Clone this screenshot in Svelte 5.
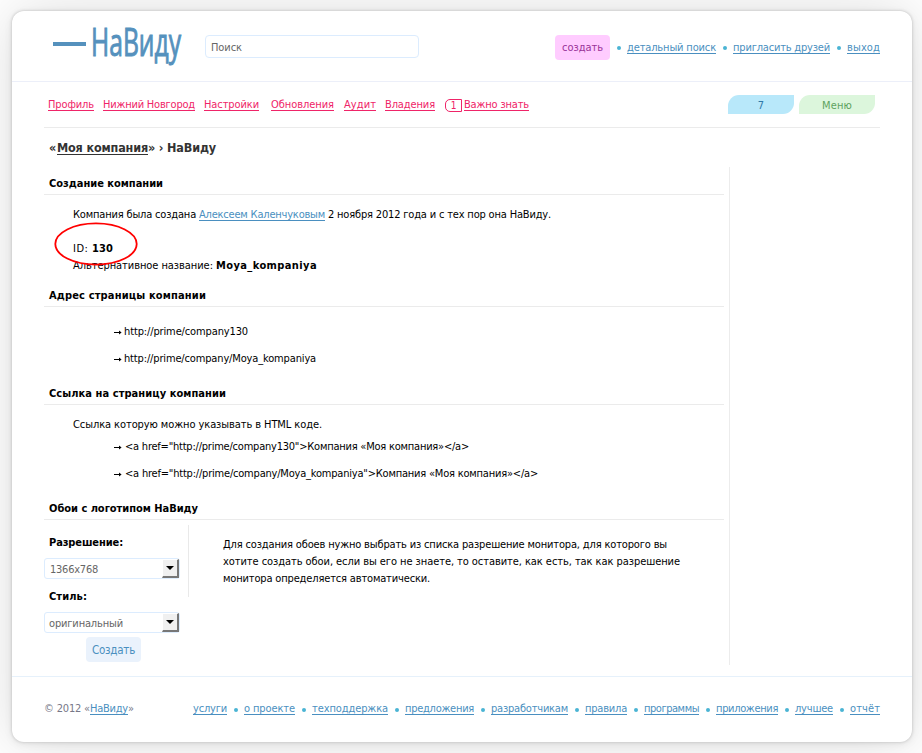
<script>
  const profileLinks = [
    ['Профиль', 46, 9],
    ['Нижний Новгород', 92, 9],
    ['Настройки', 55, 12],
    ['Обновления', 63, 10],
    ['Аудит', 32, 9],
    ['Владения', 50, 10]
  ];
  const topLinks = [
    ['детальный поиск', 89],
    ['пригласить друзей', 97],
    ['выход', 33]
  ];
  const footerLinks = [
    ['услуги', 34],
    ['о проекте', 51],
    ['техподдержка', 76],
    ['предложения', 69],
    ['разработчикам', 77],
    ['правила', 42],
    ['программы', 55],
    ['приложения', 62],
    ['лучшее', 38],
    ['отчёт', 30]
  ];
  const codeShort = '<a href="http://prime/company130">Компания «Моя компания»</a>';
  const codeLong = '<a href="http://prime/company/Moya_kompaniya">Компания «Моя компания»</a>';

  // Tracks a run of text so that it fills the given width.
  function fit(node, width) {
    const gap = width - node.getBoundingClientRect().width;
    node.style.letterSpacing = gap / node.textContent.length + 'px';
  }

  // Condenses the wordmark to the given width.
  function condense(node, width) {
    node.style.transform = `scaleX(${width / node.getBoundingClientRect().width})`;
  }
</script>

{#snippet t(text, width)}<span class="t" use:fit={width}>{text}</span>{/snippet}
{#snippet link(text, width)}<a class="t" href="#top" use:fit={width}>{text}</a>{/snippet}
{#snippet arrow()}
  <svg class="arrow" width="8" height="7" viewBox="0 0 8 7"><path d="M0 3h5V1.4L7.6 3.5 5 5.6V4H0z" fill="#000" /></svg>
{/snippet}
{#snippet select(text, width, pad)}
  <div class="select" style:padding-left="{pad}px">
    {@render t(text, width)}
    <span class="drop"><svg width="8" height="4" viewBox="0 0 8 4"><path d="M0 0h8L4 4z" fill="#000" /></svg></span>
  </div>
{/snippet}

<div class="page">
  <div class="card">
    <header>
      <div class="logo">
        <span class="dash"></span>
        <div class="word"><span use:condense={90}>НаВиду</span></div>
      </div>
      <div class="search">{@render t('Поиск', 31)}</div>
      <nav class="top">
        <span class="create">{@render t('создать', 41)}</span>
        {#each topLinks as [text, width]}<i></i>{@render link(text, width)}{/each}
      </nav>
    </header>

    <div class="bar">
      <nav class="profile">
        {#each profileLinks as [text, width, gap]}
          <span style:margin-right="{gap}px">{@render link(text, width)}</span>
        {/each}
        <span class="badge">1</span>
        {@render link('Важно знать', 65)}
      </nav>
      <div class="tabs">
        <span class="tab blue">7</span>
        <span class="tab green">{@render t('Меню', 30)}</span>
      </div>
    </div>

    <div class="body">
      <main>
        <h1>{@render t('«', 8)}{@render link('Моя компания', 91)}{@render t('» › НаВиду', 68)}</h1>

        <h2 class="first">{@render t('Создание компании', 114)}</h2>
        <section class="created">
          <p>{@render t('Компания была создана ', 126)}{@render link('Алексеем Каленчуковым', 126)}{@render t(' 2 ноября 2012 года и с тех пор она НаВиду.', 226)}</p>
          <p class="id">
            {@render t('ID: ', 19)}<b>{@render t('130', 21)}</b>
            <svg class="mark" width="86" height="46" viewBox="0 0 86 46"><ellipse cx="43" cy="23" rx="40.7" ry="20.6" /></svg>
          </p>
          <p>{@render t('Альтернативное название: ', 143)}<b>{@render t('Moya_kompaniya', 101)}</b></p>
        </section>

        <h2>{@render t('Адрес страницы компании', 157)}</h2>
        <ul class="addresses">
          <li>{@render arrow()}{@render t('http://prime/company130', 124)}</li>
          <li>{@render arrow()}{@render t('http://prime/company/Moya_kompaniya', 192)}</li>
        </ul>

        <h2>{@render t('Ссылка на страницу компании', 177)}</h2>
        <section class="codes">
          <p>{@render t('Ссылка которую можно указывать в HTML коде.', 249)}</p>
          <ul>
            <li>{@render arrow()}{@render t(codeShort, 344)}</li>
            <li>{@render arrow()}{@render t(codeLong, 413)}</li>
          </ul>
        </section>

        <h2>{@render t('Обои с логотипом НаВиду', 149)}</h2>
        <div class="wallpaper">
          <form>
            <h3>{@render t('Разрешение:', 74)}</h3>
            {@render select('1366x768', 48, 5)}
            <h3>{@render t('Стиль:', 38)}</h3>
            {@render select('оригинальный', 74, 4)}
            <button type="button">{@render t('Создать', 43)}</button>
          </form>
          <div class="note">
            <p>{@render t('Для создания обоев нужно выбрать из списка разрешение монитора, для которого вы', 444)}</p>
            <p>{@render t('хотите создать обои, если вы его не знаете, то оставите, как есть, так как разрешение', 457)}</p>
            <p>{@render t('монитора определяется автоматически.', 207)}</p>
          </div>
        </div>
      </main>
    </div>

    <footer>
      <div class="copy">{@render t('© 2012 «', 46)}{@render link('НаВиду', 38)}{@render t('»', 6)}</div>
      <nav>
        {#each footerLinks as [text, width], n}{#if n}<i></i>{/if}{@render link(text, width)}{/each}
      </nav>
    </footer>
  </div>
</div>

<style>
  :global(body) { background: #fff; overflow: hidden; }
  * { box-sizing: border-box; }
  .page {
    height: 753px;
    overflow: hidden;
    padding: 11px 10px 11px 12px;
    font: 11px/18px "DejaVu Sans Condensed", "DejaVu Sans", sans-serif;
    font-stretch: condensed;
    color: #000;
  }
  .card {
    height: 731px;
    display: flex;
    flex-direction: column;
    background: #fff;
    border-radius: 12px;
    box-shadow: 0 0 3px #bbb, 0 2px 9px rgba(0, 0, 0, 0.08), 0 0 60px rgba(0, 0, 0, 0.14);
  }
  .t { white-space: pre; flex: none; }
  a { color: #4a8fc0; text-decoration: none; border-bottom: 1px solid currentColor; display: inline-block; line-height: 11px; }
  p, h1, h2, h3, ul { margin: 0; padding: 0; list-style: none; }
  p { height: 16px; }
  h2, h3, b { font-size: 11px; line-height: 18px; }
  nav { display: flex; align-items: center; }
  i { width: 4px; height: 4px; border-radius: 2px; background: #4ab4d4; margin: 1px 6.5px 0; flex: none; }

  header { height: 71px; flex: none; border-bottom: 1px solid #eceff9; display: flex; padding: 0 32px 0 41px; }
  .logo { display: flex; width: 152px; height: 60px; }
  .dash { width: 33px; height: 4px; background: #5591bd; margin: 31px 5px 0 0; flex: none; }
  .word { width: 90px; height: 56px; margin-top: 2px; }
  .word span { display: inline-block; transform-origin: left; white-space: nowrap; font: 39px/56px "Open Sans", sans-serif; color: #5591bd; -webkit-text-stroke: 1px #5591bd; }
  .search { margin-top: 24px; width: 214px; height: 23px; border: 1px solid #dcecfe; border-radius: 4px; padding: 3px 5px; color: #666; }
  .top { margin: 24px 0 0 auto; height: 25px; }
  .create { width: 55px; height: 25px; line-height: 25px; text-align: center; background: #fcf; color: #939; border-radius: 4px; }

  .bar { height: 46px; flex: none; margin: 0 32px; border-bottom: 1px solid #ebebeb; display: flex; justify-content: space-between; }
  .profile { height: 16px; margin: 15px 0 0 4px; }
  .profile a { color: #ef2468; }
  .badge { width: 17px; height: 13px; border: 1px solid #ef2468; border-radius: 5px 0 0 5px; color: #ef2468; font-size: 10px; line-height: 11px; text-align: center; margin-right: 2px; }
  .tabs { display: flex; gap: 5px; margin: 13px 5px 0 0; }
  .tab { height: 19px; line-height: 21px; text-align: center; border-radius: 11px 0; }
  .blue { width: 66px; background: #b8e8fa; color: #3078a8; }
  .green { width: 76px; background: #dcf6dc; color: #5fa35f; }

  .body { height: 548px; flex: none; padding-left: 32px; }
  main { width: 686px; height: 537px; padding-right: 6px; background: linear-gradient(#ececec, #ececec) right 39px / 1px 499px no-repeat; }
  h1 { height: 27px; font-size: 12.5px; line-height: 18px; padding: 11px 0 0 5px; color: #333; }
  h1 a { color: #333; line-height: 12px; }
  h2 { height: 20px; padding-left: 5px; border-bottom: 1px solid #ebebeb; }
  .first { margin-top: 20px; }
  .created { height: 92px; padding: 11px 0 0 29px; }
  .created .id { margin: 18px 0 1px; position: relative; }
  .mark { position: absolute; left: -20px; top: -19px; fill: none; stroke: #f00; stroke-width: 1.8; }
  li { display: flex; align-items: flex-start; height: 16px; margin-bottom: 11px; }
  .arrow { margin: 6px 2px 0 0; flex: none; }
  .addresses { height: 78px; padding: 16px 0 0 70px; }
  .codes { height: 95px; padding: 11px 0 0 29px; }
  .codes ul { padding: 6px 0 0 41px; }
  .codes .arrow { margin-right: 3px; }

  .wallpaper { display: flex; }
  form { width: 145px; display: flex; flex-direction: column; padding-top: 14px; background: linear-gradient(#e9e9e9, #e9e9e9) right 5px / 1px 72px no-repeat; }
  h3 { height: 16px; padding-left: 5px; margin-bottom: 8px; }
  .select { width: 136px; height: 21px; margin-bottom: 9px; border: 1px solid #dcecfe; border-radius: 3px; color: #666; display: flex; justify-content: space-between; line-height: 21px; }
  .drop { width: 17px; height: 19px; background: #f0f0f0; border: 1px solid #fff; border-right: 2px solid #777; border-bottom: 2px solid #777; display: flex; align-items: center; justify-content: center; }
  button { width: 55px; height: 25px; margin: -5px 0 0 42px; padding: 0; border: 0; border-radius: 4px; background: #eaf2fc; color: #4a90c0; font: inherit; font-size: 11.5px; }
  .note { padding: 16px 0 0 34px; }
  .note p { height: 17px; }

  footer { flex: 1; border-top: 1px solid #e6f1fb; display: flex; justify-content: space-between; align-items: flex-start; padding: 24px 32px 0; }
  footer nav { height: 16px; }
  .copy { height: 16px; line-height: 16px; color: #778; white-space: nowrap; }
</style>
